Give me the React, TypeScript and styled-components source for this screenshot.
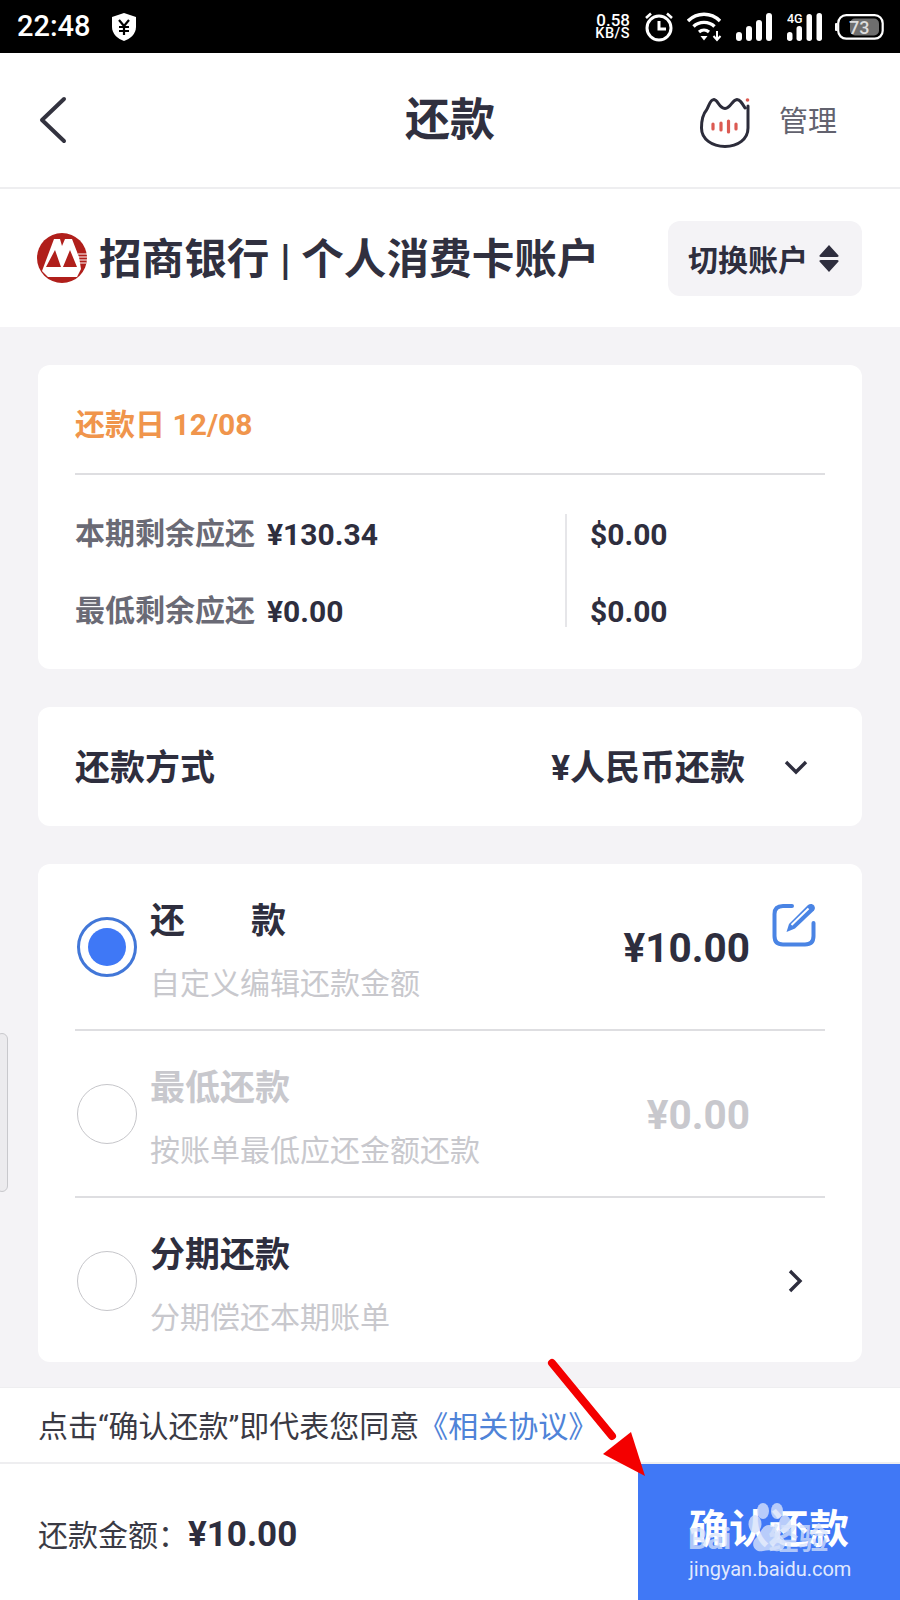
import React from "react";
import styled, { createGlobalStyle } from "styled-components";

const Global = createGlobalStyle`
  html, body { margin: 0; padding: 0; background: #f4f3f6; }
  * { box-sizing: border-box; }
  body { font-family: Roboto, "Noto Sans CJK SC", sans-serif; color: #2e2e3e; }
`;

const Page = styled.div`
  position: relative;
  width: 900px;
  height: 1600px;
  overflow: hidden;
  display: flex;
  flex-direction: column;
  background: #f4f3f6;
`;

const StatusBar = styled.div`
  height: 53px;
  background: #000;
  color: #fff;
  display: flex;
  align-items: center;
  padding: 0 16px 0 17px;
`;
const Clock = styled.span`
  font-size: 29px;
  font-weight: 500;
  margin-right: 20px;
  line-height: 1;
`;
const StatusRight = styled.div`
  margin-left: auto;
  display: flex;
  align-items: center;
`;
const Speed = styled.div`
  display: flex;
  flex-direction: column;
  align-items: flex-end;
  font-size: 17px;
  line-height: 13px;
  font-weight: 500;
  margin-right: 14px;
  small { font-size: 14.5px; letter-spacing: 0.5px; }
`;
const StatusIcon = styled.svg`
  display: block;
  flex: none;
`;

const Nav = styled.div`
  height: 136px;
  background: #fff;
  border-bottom: 2px solid #eeeef0;
  display: grid;
  grid-template-columns: 1fr auto 1fr;
  align-items: center;
  padding: 0 38px;
`;
const Title = styled.div`
  font-size: 45px;
  font-weight: 700;
  text-align: center;
  line-height: 1;
  color: #30303f;
`;
const NavRight = styled.div`
  display: flex;
  justify-content: flex-end;
  align-items: center;
  gap: 29px;
  padding-right: 25px;
`;
const CatIcon = styled.svg`
  display: block;
  margin-top: 5px;
`;
const Manage = styled.span`
  font-size: 29px;
  color: #62626e;
  line-height: 1;
  padding-top: 4px;
`;

const AccountRow = styled.div`
  height: 138px;
  background: #fff;
  display: flex;
  align-items: center;
  padding: 0 38px 0 37px;
`;
const AccountName = styled.div`
  font-size: 42.6px;
  font-weight: 700;
  margin-left: 12px;
  padding-top: 3px;
  line-height: 1;
  white-space: nowrap;
  color: #30303f;
`;
const SwitchButton = styled.div`
  margin-left: auto;
  width: 194px;
  height: 75px;
  background: #f4f3f6;
  border-radius: 12px;
  display: flex;
  align-items: center;
  gap: 11px;
  padding-left: 20px;
  font-size: 30px;
  font-weight: 700;
`;

const Main = styled.div`
  flex: 1;
  padding: 38px 38px 25px;
  display: flex;
  flex-direction: column;
  gap: 38px;
`;
const Card = styled.div<{ $h: number }>`
  height: ${(p) => p.$h}px;
  background: #fff;
  border-radius: 12px;
  padding: 0 37px;
`;
const DueDate = styled.div`
  height: 110px;
  display: flex;
  align-items: center;
  border-bottom: 2px solid #dedee1;
  font-size: 30px;
  font-weight: 700;
  color: #f0954c;
  padding-top: 5px;
`;
const Owed = styled.div`
  display: grid;
  grid-template-columns: 492px 1fr;
  padding-top: 39px;
`;
const OwedLeft = styled.div`
  border-right: 2px solid #e6e6e9;
  display: flex;
  flex-direction: column;
  gap: 37px;
  height: 113px;
`;
const OwedRight = styled.div`
  display: flex;
  flex-direction: column;
  gap: 37px;
  padding-left: 23px;
`;
const OwedLine = styled.div`
  flex: none;
  height: 40px;
  display: flex;
  align-items: center;
  gap: 12px;
`;
const OwedLabel = styled.span`
  color: #6a6a75;
  font-size: 30px;
  font-weight: 700;
  line-height: 36px;
`;
const OwedValue = styled.span`
  font-size: 30px;
  font-weight: 700;
  line-height: 36px;
  margin-top: 2px;
`;
const MethodCard = styled(Card)`
  display: flex;
  align-items: center;
  font-size: 35px;
  font-weight: 700;
`;
const MethodLabel = styled.span`
  padding-bottom: 4px;
`;
const MethodValue = styled.span`
  margin-left: auto;
  margin-right: 38px;
  padding-bottom: 4px;
`;
const OptionRow = styled.div<{ $last?: boolean }>`
  height: ${(p) => (p.$last ? 165 : 167)}px;
  display: grid;
  grid-template-columns: 75px 1fr auto;
  align-items: center;
  border-bottom: ${(p) => (p.$last ? "none" : "2px solid #dedee1")};
  position: relative;
`;
const Radio = styled.div<{ $on?: boolean }>`
  width: 60px;
  height: 60px;
  margin-left: 2px;
  border-radius: 50%;
  border: ${(p) => (p.$on ? "3px solid #4277d8" : "1px solid #c6c6ca")};
  display: flex;
  align-items: center;
  justify-content: center;
  &::after {
    content: "";
    display: ${(p) => (p.$on ? "block" : "none")};
    width: 38px;
    height: 38px;
    border-radius: 50%;
    background: #3f78f6;
  }
`;
const OptionText = styled.div`
  display: flex;
  flex-direction: column;
  gap: 25px;
  padding-top: 11px;
`;
const OptionTitle = styled.div<{ $muted?: boolean }>`
  font-size: 35px;
  line-height: 38px;
  font-weight: 700;
  color: ${(p) => (p.$muted ? "#c8c8cd" : "#2e2e3e")};
  white-space: pre;
`;
const TitleGap = styled.span`
  display: inline-block;
  width: 66px;
`;
const OptionSub = styled.div`
  font-size: 30px;
  line-height: 36px;
  color: #c8c8cd;
`;
const Amount = styled.div<{ $muted?: boolean }>`
  font-size: 40.5px;
  font-weight: 700;
  margin-right: 75px;
  padding-top: 3px;
  color: ${(p) => (p.$muted ? "#c8c8cd" : "#2e2e3e")};
`;
const EditIcon = styled.svg`
  position: absolute;
  right: 9px;
  top: 39px;
`;
const Chevron = styled.svg`
  margin-right: 22px;
  display: block;
`;
const MethodChevron = styled.svg`
  margin-right: 16px;
  display: block;
`;

const Agreement = styled.div`
  height: 77px;
  background: #fff;
  border-top: 1px solid #eeeef0;
  border-bottom: 2px solid #eeeef0;
  display: flex;
  align-items: center;
  padding-left: 38px;
  padding-bottom: 2px;
  font-size: 30px;
  color: #3a3a44;
  white-space: nowrap;
`;
const AgreementLink = styled.span`
  color: #4f83d8;
  margin-left: -1px;
`;
const Footer = styled.div`
  height: 136px;
  background: #fff;
  display: flex;
  align-items: stretch;
`;
const Total = styled.div`
  flex: 1;
  padding-left: 38px;
  padding-top: 5px;
  display: flex;
  align-items: center;
  font-size: 30px;
  color: #3a3a44;
`;
const TotalLabel = styled.span`
  padding-bottom: 4px;
`;
const TotalValue = styled.span`
  font-size: 35px;
  font-weight: 700;
  color: #2e2e3e;
`;
const Confirm = styled.div`
  position: relative;
  width: 262px;
  background: #4078f6;
  color: #fff;
  font-size: 40px;
  font-weight: 700;
  display: flex;
  align-items: center;
  justify-content: center;
  padding-bottom: 13px;
`;
const Paw = styled.svg`
  position: absolute;
  left: 108px;
  top: 39px;
  opacity: 0.8;
`;
const WaterBai = styled.span`
  position: absolute;
  left: 50px;
  top: 57px;
  font-size: 30px;
  font-weight: 700;
  line-height: 36px;
  white-space: pre;
  color: rgba(214, 226, 251, 0.75);
`;
const WaterUrl = styled.span`
  position: absolute;
  left: 51px;
  top: 92px;
  font-size: 20px;
  font-weight: 400;
  line-height: 26px;
  color: rgba(255, 255, 255, 0.85);
`;
const SideHandle = styled.div`
  position: absolute;
  left: -4px;
  top: 1033px;
  width: 12px;
  height: 159px;
  background: #ecebee;
  border: 1px solid #c8c8cc;
  border-radius: 6px;
`;
const ArrowOverlay = styled.svg`
  position: absolute;
  left: 540px;
  top: 1350px;
`;

export default function App() {
  return (
    <Page>
      <Global />
      <StatusBar>
        <Clock>22:48</Clock>
        <StatusIcon width="26" height="30" viewBox="0 0 26 30">
          <path d="M13 1 L25 5 V15 C25 22 19 27 13 29 C7 27 1 22 1 15 V5 Z" fill="#fff" />
          <path d="M8 8 L13 14 L18 8 M8 15 H18 M8 19 H18 M13 14 V23" stroke="#000" strokeWidth="2.2" fill="none" />
        </StatusIcon>
        <StatusRight>
          <Speed>
            <span>0.58</span>
            <small>KB/S</small>
          </Speed>
          <StatusIcon width="30" height="30" viewBox="0 0 30 30" style={{ marginRight: 13 }}>
            <circle cx="15" cy="16" r="12" stroke="#fff" strokeWidth="3" fill="none" />
            <path d="M15 9 V17 H22" stroke="#fff" strokeWidth="3" fill="none" />
            <path d="M2 6 L7 1.5 M28 6 L23 1.5" stroke="#fff" strokeWidth="2.6" />
          </StatusIcon>
          <StatusIcon width="36" height="30" viewBox="0 0 36 30" style={{ marginRight: 13 }}>
            <path d="M1 9 C10 0 24 0 33 9" stroke="#fff" strokeWidth="3.4" fill="none" />
            <path d="M6.5 14.5 C12 9 22 9 27.5 14.5" stroke="#fff" strokeWidth="3.4" fill="none" />
            <path d="M12 20 C15 17.5 19 17.5 22 20" stroke="#fff" strokeWidth="3.2" fill="none" />
            <path d="M13.5 24 H20.5 L17 28.5 Z" fill="#fff" />
            <path d="M30 19 V27 M26.5 24 L30 28 L33.5 24" stroke="#fff" strokeWidth="2" fill="none" />
          </StatusIcon>
          <StatusIcon width="37" height="28" viewBox="0 0 37 28" style={{ marginRight: 14 }}>
            <rect x="0" y="19" width="6" height="9" rx="3" fill="#fff" />
            <rect x="10" y="13" width="6" height="15" rx="3" fill="#fff" />
            <rect x="20" y="7" width="6" height="21" rx="3" fill="#fff" />
            <rect x="30" y="0" width="6" height="28" rx="3" fill="#fff" />
          </StatusIcon>
          <StatusIcon width="36" height="34" viewBox="0 -6 36 34" style={{ marginRight: 12, marginTop: -6 }}>
            <text x="0" y="9.5" fontSize="12.5" fontWeight="500" fill="#fff" fontFamily="Roboto">4G</text>
            <rect x="0" y="19" width="5.5" height="9" rx="2.7" fill="#fff" />
            <rect x="9.5" y="13" width="5.5" height="15" rx="2.7" fill="#fff" />
            <rect x="19.5" y="1" width="5.5" height="27" rx="2.7" fill="#fff" />
            <rect x="29.5" y="0" width="5.5" height="28" rx="2.7" fill="#fff" />
          </StatusIcon>
          <StatusIcon width="49" height="26" viewBox="0 0 49 26">
            <rect x="3.2" y="1.2" width="44.5" height="23.5" rx="8" fill="none" stroke="#fff" strokeWidth="2.2" />
            <rect x="15" y="4.5" width="29" height="17" rx="5" fill="#6e6e6e" />
            <rect x="0" y="9" width="2.4" height="8" rx="1" fill="#fff" />
            <text x="14" y="20" fontSize="18" fontWeight="500" fill="#ddd" fontFamily="Roboto">73</text>
          </StatusIcon>
        </StatusRight>
      </StatusBar>

      <Nav>
        <svg width="30" height="48" viewBox="0 0 30 48" style={{ display: "block" }}>
          <path d="M26 3 L4 24 L26 45" stroke="#33333f" strokeWidth="4" fill="none" strokeLinecap="round" strokeLinejoin="round" />
        </svg>
        <Title>还款</Title>
        <NavRight>
          <CatIcon width="50" height="50" viewBox="0 0 50 50">
            <path
              d="M14 1.5 C10 1.5 9 8 6.5 12 C3 16 1.5 23 1.5 30 C1.5 41 12 48.5 25 48.5 C38 48.5 48 41 48 30 V8 M14 1.5 C18 2 19 10 25 10.5 C31 10 32 2 37 1.5 C40 1.5 42 5 45 10"
              fill="none"
              stroke="#2c2c3a"
              strokeWidth="3"
              strokeLinecap="round"
              strokeLinejoin="round"
            />
            <circle cx="47.5" cy="2" r="1.8" fill="#dc5a52" />
            <path d="M13 26 V31 M21 25 V32 M28.5 23 V34 M36 26 V31" stroke="#dc5a52" strokeWidth="3.2" strokeLinecap="round" />
          </CatIcon>
          <Manage>管理</Manage>
        </NavRight>
      </Nav>

      <AccountRow>
        <svg width="50" height="50" viewBox="0 0 50 50" style={{ display: "block", flex: "none" }}>
          <circle cx="25" cy="25" r="25" fill="#b01f1b" />
          <path d="M5 38 L17 6 H23 L25 13 L28 6 H35 L42 24 L44 36 L40 44 H11 Z" fill="#fff" />
          <path d="M9 34 L18 17 L24 34 Z M26 34 L33 17 L40 34 Z" fill="#b01f1b" />
          <path d="M41 21 H50 M41 24 H50 M41 27 H50 M41 30 H49.5" stroke="#fff" strokeWidth="1.2" />
        </svg>
        <AccountName>招商银行 | 个人消费卡账户</AccountName>
        <SwitchButton>
          切换账户
          <svg width="20" height="29" viewBox="0 0 20 29" style={{ display: "block" }}>
            <path d="M10 1 L19.5 11.5 Q20 13 18 13 H2 Q0 13 0.5 11.5 Z M2 16 H18 Q20 16 19.5 17.5 L10 28 L0.5 17.5 Q0 16 2 16 Z" fill="#2e2e3e" />
          </svg>
        </SwitchButton>
      </AccountRow>

      <Main>
        <Card $h={304}>
          <DueDate>还款日 12/08</DueDate>
          <Owed>
            <OwedLeft>
              <OwedLine>
                <OwedLabel>本期剩余应还</OwedLabel>
                <OwedValue>¥130.34</OwedValue>
              </OwedLine>
              <OwedLine>
                <OwedLabel>最低剩余应还</OwedLabel>
                <OwedValue>¥0.00</OwedValue>
              </OwedLine>
            </OwedLeft>
            <OwedRight>
              <OwedLine>
                <OwedValue>$0.00</OwedValue>
              </OwedLine>
              <OwedLine>
                <OwedValue>$0.00</OwedValue>
              </OwedLine>
            </OwedRight>
          </Owed>
        </Card>

        <MethodCard $h={119}>
          <MethodLabel>还款方式</MethodLabel>
          <MethodValue>¥人民币还款</MethodValue>
          <MethodChevron width="26" height="16" viewBox="0 0 26 16">
            <path d="M3 3 L13 13 L23 3" stroke="#2e2e3e" strokeWidth="3.4" fill="none" />
          </MethodChevron>
        </MethodCard>

        <Card $h={498}>
          <OptionRow>
            <Radio $on />
            <OptionText>
              <OptionTitle>
                还<TitleGap />款
              </OptionTitle>
              <OptionSub>自定义编辑还款金额</OptionSub>
            </OptionText>
            <Amount>¥10.00</Amount>
            <EditIcon width="44" height="44" viewBox="0 0 44 44">
              <path d="M20 3 H11 C5.5 3 2.5 5.5 2.5 11 V33 C2.5 38.5 5.5 41.5 11 41.5 H33 C38.5 41.5 41.5 38.5 41.5 33 V20" stroke="#4a84e4" strokeWidth="4" fill="none" strokeLinecap="round" />
              <path d="M14.5 29 L17 21 L36 2 C38 0.5 40.5 0.5 42 2.5 C43.5 4.5 43 6 42 7.5 L23 25.5 Z" fill="#4a84e4" />
              <path d="M19.5 22 L36.5 5.5" stroke="#fff" strokeWidth="2" />
            </EditIcon>
          </OptionRow>
          <OptionRow>
            <Radio />
            <OptionText>
              <OptionTitle $muted>最低还款</OptionTitle>
              <OptionSub>按账单最低应还金额还款</OptionSub>
            </OptionText>
            <Amount $muted>¥0.00</Amount>
          </OptionRow>
          <OptionRow $last>
            <Radio />
            <OptionText>
              <OptionTitle>分期还款</OptionTitle>
              <OptionSub>分期偿还本期账单</OptionSub>
            </OptionText>
            <Chevron width="16" height="26" viewBox="0 0 16 26">
              <path d="M3 3 L13 13 L3 23" stroke="#2e2e3e" strokeWidth="3.4" fill="none" />
            </Chevron>
          </OptionRow>
        </Card>
      </Main>

      <Agreement>
        点击“确认还款”即代表您同意<AgreementLink>《相关协议》</AgreementLink>
      </Agreement>
      <Footer>
        <Total>
          <TotalLabel>还款金额：</TotalLabel>
          <TotalValue>¥10.00</TotalValue>
        </Total>
        <Confirm>
          确认还款
          <WaterBai>Bai     经验</WaterBai>
          <Paw width="46" height="52" viewBox="0 0 46 52">
            <ellipse cx="9" cy="21" rx="6.5" ry="9" fill="#d6e2fb" />
            <ellipse cx="17" cy="8" rx="6" ry="8" fill="#d6e2fb" />
            <ellipse cx="31" cy="8" rx="6" ry="8" fill="#d6e2fb" />
            <ellipse cx="39" cy="21" rx="6" ry="9" fill="#d6e2fb" />
            <path d="M23 22 C30 22 31 30 37 35 C42 40 38 50 29 48 C25 47 21 47 17 48 C8 50 4 40 10 35 C15 30 16 22 23 22 Z" fill="#d6e2fb" />
          </Paw>
          <WaterUrl>jingyan.baidu.com</WaterUrl>
        </Confirm>
      </Footer>

      <SideHandle />
      <ArrowOverlay width="120" height="140" viewBox="0 0 120 140">
        <path d="M12 13 L72 86" stroke="#f40000" strokeWidth="8" strokeLinecap="round" />
        <path d="M105 126 L63 104 L91 82 Z" fill="#f40000" />
      </ArrowOverlay>
    </Page>
  );
}
